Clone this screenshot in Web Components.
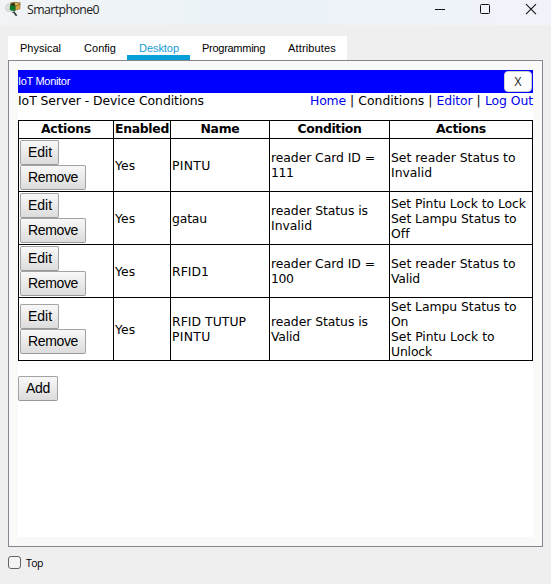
<!DOCTYPE html>
<html lang="en">
<head>
<meta charset="utf-8">
<title>Smartphone0</title>
<style>
html,body{margin:0;background:#efefef;overflow:hidden}
body{width:551px;height:584px}
</style>
</head>
<body>
<device-window></device-window>
<script>
const define = (name, html, setup) => customElements.define(name, class extends HTMLElement {
  connectedCallback() {
    if (this.shadowRoot) return;
    const t = document.createElement('template');
    t.innerHTML = html;
    this.attachShadow({mode: 'open'}).append(t.content.cloneNode(true));
    if (setup) setup(this, this.shadowRoot);
  }
});

// A line of text whose tracking is adjusted to a given width.
define('fit-text', `<style>:host{display:block;white-space:pre;width:max-content}span{display:inline-block}</style><span></span>`, (el, root) => {
  const s = root.querySelector('span');
  s.textContent = el.getAttribute('t');
  const n = s.textContent.length, w = +el.getAttribute('w');
  if (w) {
    s.style.letterSpacing = (w - s.getBoundingClientRect().width) / n + 'px';
  }
});

define('title-bar', `<style>
:host{display:flex;height:25px;background:linear-gradient(90deg,#f1f3f5,#ebf3f8 45%,#f1f3fa);font:12.3px/16px "Open Sans","Noto Sans",sans-serif;color:#1b1b1b;box-sizing:border-box;padding:0 7px 0 5px}
.icon{flex:none;margin-top:1px}
fit-text{margin:2px 0 0 6px}
.controls{margin-left:auto;margin-top:3px}
</style>
<svg class="icon" width="16" height="16" viewBox="0 0 16 16"><path d="M5 1.8 9 1l6.5.6-.3 6.4-6 2z" fill="#8a6226"/><path d="m8 1.8 7 .4-5 3z" fill="#e1bd63"/><path d="m10.6 5.8 4.4-2.4-.3 4.4-4.1 1.4z" fill="#d8a548"/><circle cx="4.5" cy="6.7" r="4" fill="#dde0dc" stroke="#c4c8c5" stroke-width=".7"/><path d="M5 4.2h5.4v5.6H6.4L4.7 8.4z" fill="#087a28"/><path d="m5.4 3 4-1.2 1 2.4-1 1-4-.8z" fill="#2c3a14"/><path d="m8.4 10.4 3.2 4.4" stroke="#313c3c" stroke-width="1.7"/><path d="m7 11.6 2.2-1" stroke="#74806f" stroke-width="1"/></svg>
<fit-text t="Smartphone0" w="72"></fit-text>
<svg class="controls" width="110" height="13" viewBox="0 0 110 13" fill="none" stroke="#111"><path d="M1 6.5h10"/><rect x="46.5" y="1.5" width="9" height="9" rx="1"/><path d="m92 1.2 10 10m0-10-10 10" stroke-width="1.1"/></svg>`);

define('tab-item', `<style>
:host{display:block;box-sizing:border-box;height:24px;padding:6px 0 0 12px;font:11px/13px "Liberation Sans",sans-serif;color:#000;background:#fff}
:host([active]){color:#159bd5;border-bottom:5px solid #069fda}
</style><slot></slot>`);

define('tab-strip', `<style>
:host{display:grid;grid-template-columns:64px 55px 63px 86px 71px;width:339px;height:24px;margin:11px 0 0 8px;background:#fff}
</style>
<tab-item><fit-text t="Physical" w="41"></fit-text></tab-item>
<tab-item><fit-text t="Config" w="32"></fit-text></tab-item>
<tab-item active><fit-text t="Desktop" w="40"></fit-text></tab-item>
<tab-item><fit-text t="Programming" w="63"></fit-text></tab-item>
<tab-item><fit-text t="Attributes" w="48"></fit-text></tab-item>`);

define('monitor-header', `<style>
:host{display:flex;align-items:flex-start;justify-content:space-between;height:23px;background:#00f;color:#fff;font:11px/13px "Liberation Sans",sans-serif}
fit-text{margin-top:5px}
button{width:28px;height:21px;margin:1px 1px 0 0;padding:0;border:1px solid #d0d0d0;border-radius:4px;background:#fdfdfd;color:#222;font:12px/19px "Open Sans",sans-serif;box-sizing:border-box}
</style><fit-text t="IoT Monitor" w="52"></fit-text><button>X</button>`);

define('page-nav', `<style>
:host{display:flex;justify-content:space-between;height:27px;font:12.4px/15px "DejaVu Sans",sans-serif;color:#000}
nav{display:flex}
a{color:#0000ee}
</style><fit-text t="IoT Server - Device Conditions" w="186"></fit-text>
<nav><a><fit-text t="Home" w="36"></fit-text></a><fit-text t=" | Conditions | " w="90.5"></fit-text><a><fit-text t="Editor" w="36"></fit-text></a><fit-text t=" | " w="12.5"></fit-text><a><fit-text t="Log Out" w="48"></fit-text></a></nav>`);

define('push-button', `<style>
:host{display:block;width:max-content}
button{display:block;height:25px;box-sizing:border-box;border:1px solid #a3a3a3;border-bottom-color:#999;border-radius:2px;background:linear-gradient(#f8f8f8,#dcdcdc);padding:0 0 1px 7px;text-align:left;color:#000;font:14px/21px "Liberation Sans",sans-serif}
</style><button></button>`, (el, root) => {
  const f = root.querySelector('button');
  f.style.width = el.getAttribute('bw') + 'px';
  f.innerHTML = `<fit-text t="${el.getAttribute('t')}" w="${el.getAttribute('w')}"></fit-text>`;
});

const lines = a => a.map(([t, w]) => `<fit-text t="${t}" w="${w}"></fit-text>`).join('');
const rows = [
  [[['PINTU',38.5]], [['reader Card ID =',104],['111',22.5]], [['Set reader Status to',124.5],['Invalid',41]]],
  [[['gatau',35]], [['reader Status is',97],['Invalid',41]], [['Set Pintu Lock to Lock',135],['Set Lampu Status to',125.5],['Off',18.5]]],
  [[['RFID1',37]], [['reader Card ID =',104],['100',22.5]], [['Set reader Status to',124.5],['Valid',29]]],
  [[['RFID TUTUP',74],['PINTU',38.5]], [['reader Status is',97],['Valid',29]], [['Set Lampu Status to',125.5],['On',17],['Set Pintu Lock to',103.5],['Unlock',41]]]
];

define('condition-table', `<style>
:host{display:grid;grid-template-columns:94px 56px 98px 119px 142px;grid-template-rows:17px 52px 52px 52px 62px;gap:1px;border:1px solid #000;background:#000;width:513px;font:12.4px/15px "DejaVu Sans",sans-serif;color:#000}
div{background:#fff;display:flex;flex-direction:column;justify-content:center;padding-left:1px;min-width:0}
.h{font-weight:bold;align-items:center;justify-content:flex-start;padding:0}
</style>` + [['Actions',50],['Enabled',54],['Name',39],['Condition',64],['Actions',50]].map(c => `<div class="h">${lines([c])}</div>`).join('')
 + rows.map(r => `<div><push-button t="Edit" w="24" bw="39"></push-button><push-button t="Remove" w="50" bw="66"></push-button></div><div>${lines([['Yes',20.5]])}</div>` + r.map(c => `<div>${lines(c)}</div>`).join('')).join(''));

define('iot-monitor', `<style>
:host{display:block;width:515px;height:467px;background:#fff}
push-button{margin-top:15px}
</style><monitor-header></monitor-header><page-nav></page-nav><condition-table></condition-table><push-button t="Add" w="24" bw="40"></push-button>`);

define('check-option', `<style>
:host{display:flex;align-items:center;gap:5px;margin:9px 0 0 8px;height:13px;font:10.5px/13px "Open Sans",sans-serif;color:#000}
i{box-sizing:border-box;width:13px;height:13px;border:1px solid #626262;border-radius:3px;background:#f3f3f3}
fit-text{margin-top:1px}
</style><i></i><fit-text t="Top" w="17"></fit-text>`);

define('device-window', `<style>
:host{display:block;width:551px;height:584px;background:#efefef}
.panel{box-sizing:border-box;width:535px;height:487px;margin-left:8px;border:1px solid #828790;background:#f9f9f9;padding:9px}
</style><title-bar></title-bar><tab-strip></tab-strip><div class="panel"><iot-monitor></iot-monitor></div><check-option></check-option>`);
</script>
</body>
</html>
